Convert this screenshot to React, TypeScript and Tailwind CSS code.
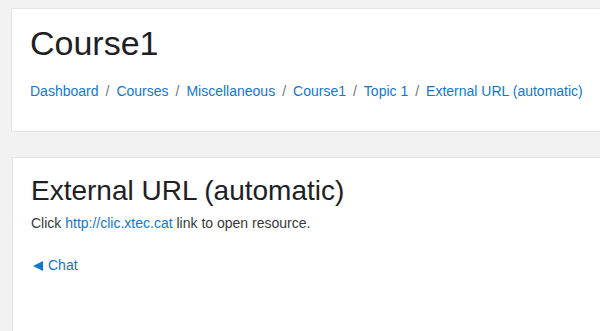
const crumbs = ['Dashboard', 'Courses', 'Miscellaneous', 'Course1', 'Topic 1', 'External URL (automatic)'];

export default function App() {
  return (
    <div
      className="h-[331px] w-[600px] overflow-hidden bg-[#f2f2f2] text-[14px] leading-[1.5] text-[#373a3c]"
      style={{ fontFamily: '"Liberation Sans", Arial, sans-serif' }}
    >
      {/* Page header */}
      <header className="ml-[11px] mt-[8px] w-[620px] border border-[#e3e3e3] bg-white px-[18px] pt-[14px] pb-[29px]">
        <h1 className="text-[34px] leading-[1.2] text-[#1d2125]">Course1</h1>
        <nav className="mt-[17px] flex items-center whitespace-nowrap">
          {crumbs.map((c, i) => (
            <span key={c} className="flex items-center">
              {i > 0 && <span className="px-[7px] text-[#6c757d]">/</span>}
              <a className="text-[#1177d1]">{c}</a>
            </span>
          ))}
        </nav>
      </header>

      {/* Main content */}
      <main className="ml-[12px] mt-[25px] h-[200px] w-[620px] border border-[#e3e3e3] bg-white px-[18px] pt-[16px]">
        <h2 className="text-[28px] leading-[1.2] text-[#1d2125]">External URL (automatic)</h2>
        <p className="mt-[6px]">
          Click <a className="text-[#1177d1]">http://clic.xtec.cat</a> link to open resource.
        </p>
        <a className="mt-[21px] flex items-center gap-[5px] pl-[2px] text-[#1177d1]">
          <svg width="10" height="10" viewBox="0 0 10 10" fill="currentColor">
            <polygon points="0,5 10,0 10,10" />
          </svg>
          <span>Chat</span>
        </a>
      </main>
    </div>
  );
}
